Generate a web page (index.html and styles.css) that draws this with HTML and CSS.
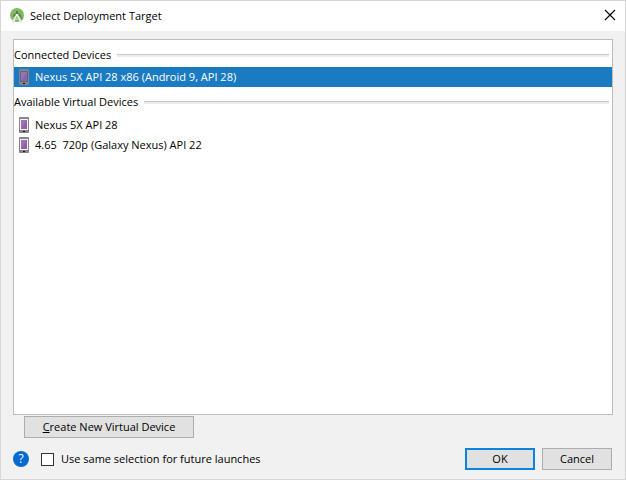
FILE: index.html
```html
<!DOCTYPE html>
<html lang="en">
<head>
<meta charset="utf-8">
<title>Select Deployment Target</title>
<link rel="stylesheet" href="styles.css">
</head>
<body>
<svg class="defs" aria-hidden="true">
  <symbol id="phone" viewBox="0 0 10 16">
    <rect width="10" height="16" rx="1" fill="#858585"/>
    <rect x="1" y="2" width="8" height="11" fill="#f4f1f6"/>
    <rect x="2" y="3" width="6" height="9" fill="#8f62a8"/>
    <path d="M2 12V3h6z" fill="#9b72b2"/>
    <rect x="4" y="14" width="2" height="1" fill="#111"/>
  </symbol>
  <symbol id="phone-selected" viewBox="0 0 10 16">
    <rect width="10" height="16" rx="1" fill="#858585"/>
    <rect x="1" y="2" width="8" height="11" fill="#56698c"/>
    <rect x="2" y="3" width="6" height="9" fill="#8f62a8"/>
    <path d="M2 12V3h6z" fill="#9b72b2"/>
    <rect x="4" y="14" width="2" height="1" fill="#111"/>
  </symbol>
</svg>
<main class="dialog">
  <header class="titlebar">
    <svg class="logo" viewBox="0 0 16 16" aria-hidden="true">
      <circle cx="8" cy="7" r="7" fill="#7fbd5b"/>
      <path d="M9 5l5.500 5a7 7 0 0 1-3 3.500z" fill="#68a64c"/>
      <path d="M4 9a4 4 0 0 1 8 0z" fill="#667a58"/>
      <path d="M7 8L3.500 15M9 8l3.500 7" stroke="#e6ebe4" stroke-width="2" fill="none"/>
      <path d="M5 10.500q3 1.500 6 0" stroke="#d5e3cd" fill="none"/>
      <circle cx="8" cy="7" r="1.500" fill="#eef1ec"/>
      <rect x="7" y="3" width="2" height="3" fill="#65735b"/>
    </svg>
    <h1 class="title">Select Deployment Target</h1>
    <button class="close" type="button" aria-label="Close">
      <svg viewBox="0 0 10 10" aria-hidden="true"><path d="M0 0l10 10M10 0L0 10" stroke="#000" stroke-width="1.100"/></svg>
    </button>
  </header>
  <div class="content">
    <section class="devices">
      <h2 class="group">Connected Devices</h2>
      <ul class="list">
        <li class="device selected"><svg class="phone" aria-hidden="true"><use href="#phone-selected"/></svg>Nexus 5X API 28 x86 (Android 9, API 28)</li>
      </ul>
      <h2 class="group">Available Virtual Devices</h2>
      <ul class="list virtual">
        <li class="device"><svg class="phone" aria-hidden="true"><use href="#phone"/></svg>Nexus 5X API 28</li>
        <li class="device"><svg class="phone" aria-hidden="true"><use href="#phone"/></svg>4.65&nbsp; 720p (Galaxy Nexus) API 22</li>
      </ul>
    </section>
    <button class="button create" type="button"><span><u>C</u>reate New Virtual Device</span></button>
    <footer class="footer">
      <button class="help" type="button" aria-label="Help">?</button>
      <label class="remember"><input class="check" type="checkbox">Use same selection for future launches</label>
      <button class="button primary" type="button">OK</button>
      <button class="button" type="button">Cancel</button>
    </footer>
  </div>
</main>
</body>
</html>
```
FILE: styles.css
```css
* { box-sizing: border-box; }
body {
  margin: 0;
  font: 11px/16px "Open Sans", "Noto Sans", sans-serif;
  color: #000;
}
button { font: inherit; color: inherit; padding: 0; }
.defs { position: absolute; width: 0; height: 0; }
.dialog {
  display: flex;
  flex-direction: column;
  min-height: 100vh;
  border: 1px solid #d6d6d6;
  background: #f1f1f1;
}
.titlebar {
  display: flex;
  align-items: center;
  height: 30px;
  padding: 0 10px 0 8px;
  background: #fff;
}
.logo { width: 16px; height: 16px; }
.title { flex: 1; margin: 0 0 0 5px; font-size: 11px; font-weight: 400; }
.close { display: flex; padding-bottom: 2px; border: 0; background: none; }
.close svg { width: 10px; height: 10px; overflow: visible; }
.content {
  flex: 1;
  display: flex;
  flex-direction: column;
  padding: 8px 12px 9px;
}
.devices {
  flex: 1;
  border: 1px solid #bcbcbc;
  background: #fff;
}
.group {
  display: flex;
  align-items: center;
  gap: 6px;
  height: 27px;
  margin: 0;
  padding: 3px 3px 0 0;
  font-size: 11px;
  font-weight: 400;
}
.group::after {
  content: "";
  flex: 1;
  height: 2px;
  border-top: 1px solid #c8c8c8;
  background: #ececec;
}
.list { margin: 0; padding: 0; list-style: none; }
.virtual { padding-top: 1px; }
.device {
  display: flex;
  align-items: center;
  gap: 6px;
  height: 20px;
  padding-left: 5px;
}
.selected { background: #1a7bc2; color: #fff; }
.phone { width: 10px; height: 16px; }
.button {
  width: 70px;
  height: 22px;
  border: 1px solid #adadad;
  background: #e1e1e1;
}
.primary { margin-right: 7px; border: 2px solid #0a84de; }
.create { width: 170px; margin: 1px 0 0 11px; }
.footer { display: flex; align-items: center; margin-top: 10px; padding-right: 1px; }
.help {
  width: 16px;
  height: 16px;
  border: 0;
  border-radius: 50%;
  background: #0869d3;
  color: #fff;
  font-size: 12px;
  font-weight: 400;
}
.remember { display: flex; align-items: center; gap: 7px; margin: 0 auto 0 12px; }
.check {
  appearance: none;
  width: 13px;
  height: 13px;
  margin: 0;
  border: 1px solid #333;
  background: #fff;
}
.check:checked { background: #0a84de; }
```
